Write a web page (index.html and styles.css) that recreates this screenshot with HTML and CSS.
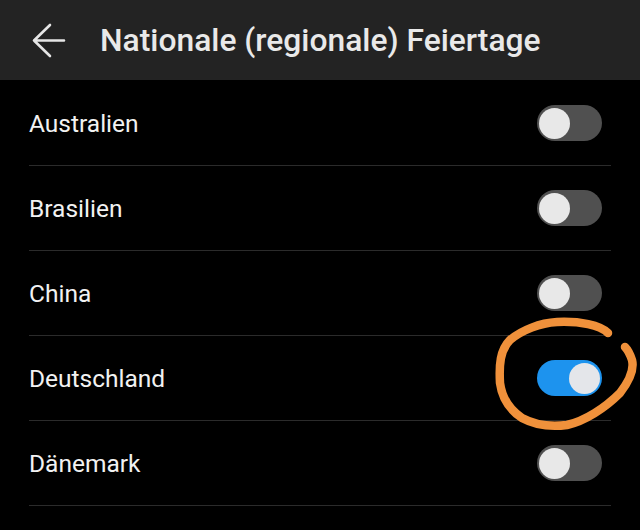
FILE: index.html
```html
<!DOCTYPE html>
<html lang="de">
<head>
<meta charset="utf-8">
<title>Nationale (regionale) Feiertage</title>
<link rel="stylesheet" href="styles.css">
</head>
<body>
<div class="screen">
  <header class="topbar">
    <svg class="back" width="34" height="36" viewBox="0 0 34 36">
      <path d="M32 17.5 H2 M18 2 L2 17.5 L18 33" fill="none" stroke="#e6e6e6" stroke-width="2.6" stroke-linecap="round" stroke-linejoin="round"/>
    </svg>
    <h1 class="title">Nationale (regionale) Feiertage</h1>
  </header>
  <ul class="list">
    <li class="row"><span class="label">Australien</span><span class="switch"><span class="knob"></span></span></li>
    <li class="row"><span class="label">Brasilien</span><span class="switch"><span class="knob"></span></span></li>
    <li class="row"><span class="label">China</span><span class="switch"><span class="knob"></span></span></li>
    <li class="row"><span class="label">Deutschland</span><span class="switch on"><span class="knob"></span></span></li>
    <li class="row"><span class="label">Dänemark</span><span class="switch"><span class="knob"></span></span></li>
  </ul>
  <svg class="scribble" width="640" height="530" viewBox="0 0 640 530">
    <path d="M608 333 C600 325 580 321 557 322 C540 323 522 330 510 340 C500 350 499 365 500 383 C502 398 510 410 522 418 C535 425 552 427 567 425 C585 421 605 408 620 393 C630 380 634 368 632 360 C630 354 628 350 625 347" fill="none" stroke="#f0913b" stroke-width="8.5" stroke-linecap="round" stroke-linejoin="round"/>
  </svg>
</div>
</body>
</html>
```
FILE: styles.css
```css
* { box-sizing: border-box; }
html, body {
  margin: 0;
  padding: 0;
  background: #000;
}
.screen {
  position: relative;
  width: 640px;
  height: 530px;
  overflow: hidden;
  background: #000;
  font-family: Roboto, "Liberation Sans", sans-serif;
}
.topbar {
  height: 80px;
  background: #232323;
  display: flex;
  align-items: center;
  padding-left: 32px;
}
.back {
  display: block;
  margin-top: 2px;
}
.title {
  margin: 0 0 0 34px;
  font-size: 31.8px;
  font-weight: 500;
  color: #e9e9e9;
  letter-spacing: 0;
}
.list {
  list-style: none;
  margin: 0;
  padding: 1px 0 0 0;
}
.row {
  margin: 0 29px 0 29px;
  height: 85px;
  border-bottom: 1.5px solid #2b2b2b;
  display: flex;
  align-items: center;
  justify-content: space-between;
}
.label {
  font-size: 24.5px;
  color: #f2f2f2;
  font-weight: 400;
}
.switch {
  width: 65px;
  height: 36px;
  border-radius: 18px;
  background: #505050;
  display: flex;
  align-items: center;
  padding: 0 2px;
  margin-right: 9px;
}
.knob {
  width: 31px;
  height: 31px;
  border-radius: 50%;
  background: #e8e8e8;
}
.switch.on {
  background: #1d93ee;
  justify-content: flex-end;
}
.switch.on .knob {
  background: #e4e6ea;
}
.scribble {
  position: absolute;
  left: 0;
  top: 0;
  pointer-events: none;
}
```
